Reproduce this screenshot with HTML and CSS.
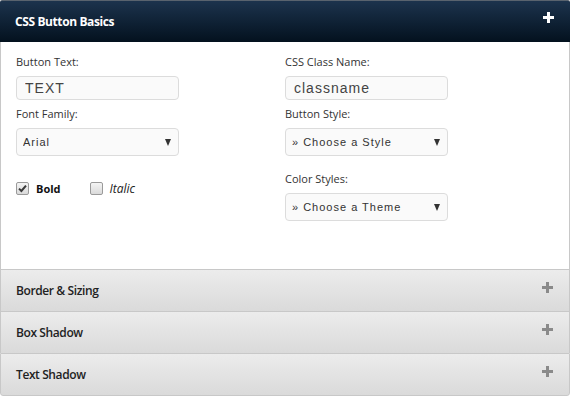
FILE: index.html
```html
<!DOCTYPE html>
<html lang="en">
<head>
    <meta charset="UTF-8">
    <title>CSS Button Generator</title>
    <link rel="stylesheet" href="styles.css">
</head>
<body>
    <div class="accordion">
        <!-- Painel aberto -->
        <div class="section section-open">
            <div class="section-head">
                <span>CSS Button Basics</span>
                <span class="plus"></span>
            </div>
            <div class="section-body">
                <div class="col">
                    <label class="field-label" for="btn-text">Button Text:</label>
                    <input class="text-input" id="btn-text" type="text" value="TEXT">

                    <label class="field-label" for="font-family">Font Family:</label>
                    <div class="select-wrap">
                        <select id="font-family" class="select">
                            <option>Arial</option>
                        </select>
                    </div>

                    <div class="checks">
                        <label class="check">
                            <span class="box">
                                <svg width="9" height="9" viewBox="0 0 9 9"><path d="M1 4.6 L3.4 7 L8 1.6" fill="none" stroke="#3a3a3a" stroke-width="2"/></svg>
                            </span>
                            <b>Bold</b>
                        </label>
                        <label class="check">
                            <span class="box"></span>
                            <i>Italic</i>
                        </label>
                    </div>
                </div>

                <div class="col">
                    <label class="field-label" for="class-name">CSS Class Name:</label>
                    <input class="text-input" id="class-name" type="text" value="classname">

                    <label class="field-label" for="btn-style">Button Style:</label>
                    <div class="select-wrap">
                        <select id="btn-style" class="select">
                            <option>&raquo; Choose a Style</option>
                        </select>
                    </div>

                    <label class="field-label label-gap" for="color-style">Color Styles:</label>
                    <div class="select-wrap">
                        <select id="color-style" class="select">
                            <option>&raquo; Choose a Theme</option>
                        </select>
                    </div>
                </div>
            </div>
        </div>

        <!-- Paineis fechados -->
        <div class="section section-closed">
            <div class="section-head">
                <span>Border &amp; Sizing</span>
                <span class="plus"></span>
            </div>
        </div>
        <div class="section section-closed">
            <div class="section-head">
                <span>Box Shadow</span>
                <span class="plus"></span>
            </div>
        </div>
        <div class="section section-closed last">
            <div class="section-head">
                <span>Text Shadow</span>
                <span class="plus"></span>
            </div>
        </div>
    </div>
</body>
</html>
```

FILE: styles.css
```css
/* Estilos gerais */
body {
    margin: 0;
    background: #fff;
    font-family: "Open Sans", Arial, sans-serif;
}

.accordion {
    width: 570px;
}

/* Cabecalho do painel */
.section-head {
    display: flex;
    justify-content: space-between;
    align-items: center;
    height: 41px;
    padding: 0 16px 0 15px;
    font-size: 12px;
    font-weight: 700;
    letter-spacing: -0.4px;
}

.section-open .section-head {
    height: 41px;
    border-top: 1px solid #59636e;
    background: linear-gradient(#1c334d, #03111e);
    color: #fff;
    border-radius: 2px 2px 0 0;
}

.plus {
    position: relative;
    width: 11px;
    height: 11px;
    margin-bottom: 8px;
}

.plus::before,
.plus::after {
    content: "";
    position: absolute;
    background: #fff;
}

.plus::before {
    left: 0;
    top: 4px;
    width: 11px;
    height: 3px;
}

.plus::after {
    left: 4px;
    top: 0;
    width: 3px;
    height: 11px;
}

.section-closed .plus::before,
.section-closed .plus::after {
    background: #8a8a8a;
}

/* Corpo do painel */
.section-body {
    display: grid;
    grid-template-columns: 269px 1fr;
    height: 227px;
    box-sizing: border-box;
    padding: 12px 0 0 15px;
    border-left: 1px solid #c8c8c8;
    border-right: 1px solid #c8c8c8;
}

.col {
    display: flex;
    flex-direction: column;
    align-items: flex-start;
}

.field-label {
    font-size: 11px;
    line-height: 15px;
    color: #333;
    margin-bottom: 7px;
}

.text-input + .field-label,
.select-wrap + .field-label {
    margin-top: 6px;
}

.select-wrap + .label-gap {
    margin-top: 15px;
}

.text-input {
    width: 163px;
    height: 24px;
    box-sizing: border-box;
    padding: 0 8px;
    border: 1px solid #dcdcdc;
    border-radius: 4px;
    background: #fafafa;
    font-family: "Liberation Sans", Arial, sans-serif;
    font-size: 14px;
    letter-spacing: 1px;
    color: #444;
}

.select-wrap {
    position: relative;
    width: 163px;
}

.select-wrap::after {
    content: "";
    position: absolute;
    right: 8px;
    top: 11px;
    border-left: 3.5px solid transparent;
    border-right: 3.5px solid transparent;
    border-top: 7px solid #333;
}

.select {
    appearance: none;
    width: 163px;
    height: 28px;
    box-sizing: border-box;
    padding: 0 6px;
    border: 1px solid #dcdcdc;
    border-radius: 4px;
    background: #fafafa;
    font-family: "Liberation Sans", Arial, sans-serif;
    font-size: 11px;
    letter-spacing: 1px;
    color: #333;
}

/* Caixas de selecao */
.checks {
    display: flex;
    gap: 29px;
    margin-top: 24px;
}

.check {
    display: flex;
    align-items: center;
    gap: 7px;
    font-size: 11px;
    color: #111;
}

.check i {
    font-size: 12px;
    color: #222;
}

.box {
    display: flex;
    align-items: center;
    justify-content: center;
    width: 11px;
    height: 11px;
    border: 1px solid #9a9a9a;
    border-radius: 2px;
    background: linear-gradient(#f4f4f4, #dadada);
}

/* Paineis fechados */
.section-closed .section-head {
    border: 1px solid #c8c8c8;
    border-bottom: none;
    background: linear-gradient(#ececec, #dadada);
    color: #222;
    font-weight: 600;
}

.section-closed .section-head .plus {
    margin-bottom: 6px;
}

.last .section-head {
    border-bottom: 1px solid #c8c8c8;
    border-radius: 0 0 3px 3px;
}
```
